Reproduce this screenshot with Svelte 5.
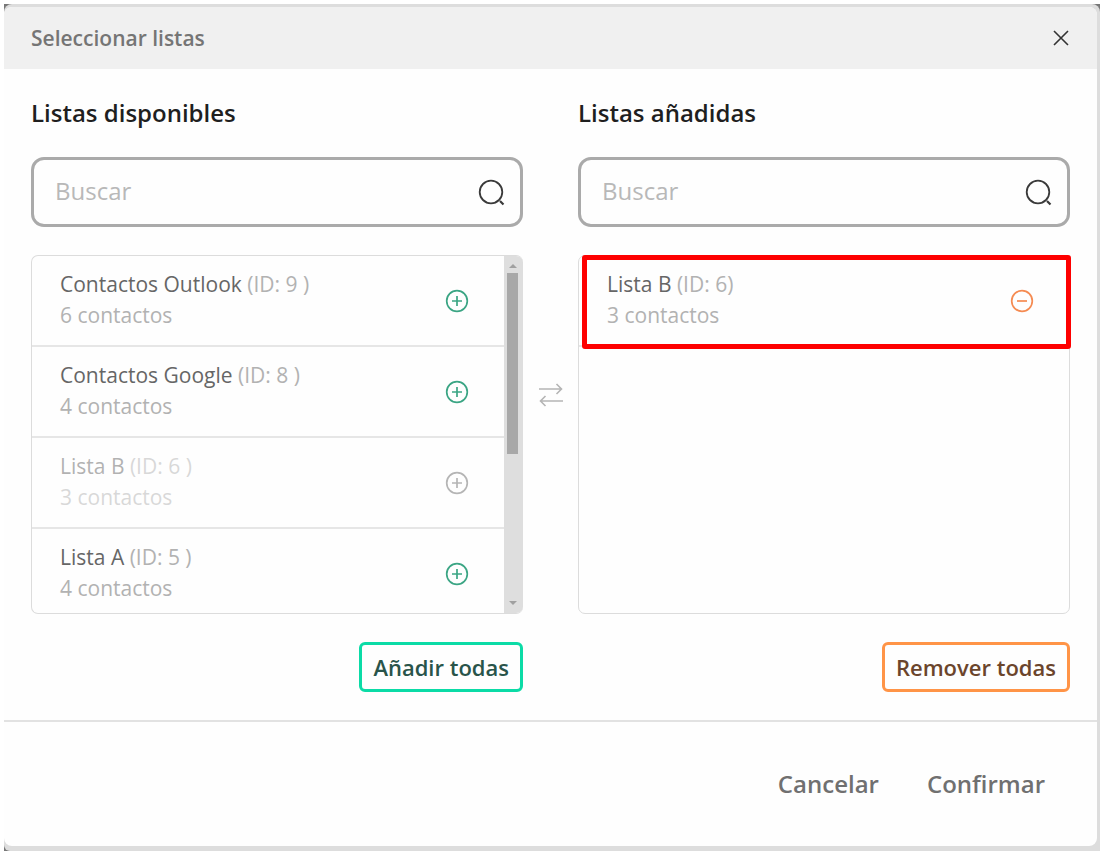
<script lang="ts">
  type List = { id: number; name: string; contacts: number };

  const available: List[] = [
    { id: 9, name: "Contactos Outlook", contacts: 6 },
    { id: 8, name: "Contactos Google", contacts: 4 },
    { id: 6, name: "Lista B", contacts: 3 },
    { id: 5, name: "Lista A", contacts: 4 },
  ];

  let added: List[] = $state([{ id: 6, name: "Lista B", contacts: 3 }]);
  let searchAvailable = $state("");
  let searchAdded = $state("");

  function matches(list: List, query: string) {
    return list.name.toLowerCase().includes(query.toLowerCase());
  }

  function isAdded(list: List) {
    return added.some((item) => item.id === list.id);
  }

  function remove(list: List) {
    added = added.filter((item) => item.id !== list.id);
  }
</script>

{#snippet searchIcon()}
  <svg class="search-icon" viewBox="0 0 28 28" aria-hidden="true">
    <circle cx="14" cy="14" r="11.3" />
    <path d="M23 23l3.500 3.500" stroke-width="2.2" />
  </svg>
{/snippet}

<div class="page">
  <div class="backdrop">
    <div class="modal" role="dialog" aria-labelledby="modal-title">
      <header>
        <h2 id="modal-title">Seleccionar listas</h2>
        <button class="close" aria-label="Cerrar">
          <svg viewBox="0 0 16 16" aria-hidden="true">
            <path d="M1 1l14 14M15 1L1 15" />
          </svg>
        </button>
      </header>

      <div class="columns">
        <section>
          <h3>Listas disponibles</h3>
          <label class="search">
            <input type="text" placeholder="Buscar" aria-label="Buscar listas disponibles" bind:value={searchAvailable} />
            {@render searchIcon()}
          </label>
          <div class="box scrollable">
            <ul>
              {#each available.filter((l) => matches(l, searchAvailable)) as list (list.id)}
                <li class:disabled={isAdded(list)}>
                  <div class="info">
                    <p><span class="name">{list.name}</span> (ID: {list.id} )</p>
                    <p>{list.contacts} contactos</p>
                  </div>
                  <button
                    class="action add"
                    aria-label="Añadir {list.name}"
                    disabled={isAdded(list)}
                    onclick={() => added.push(list)}
                  >
                    <svg viewBox="0 0 24 24" aria-hidden="true">
                      <circle cx="12" cy="12" r="10.3" />
                      <path d="M12 7v10M7 12h10" />
                    </svg>
                  </button>
                </li>
              {/each}
            </ul>
            <div class="scrollbar" aria-hidden="true">
              <span class="arrow up"></span>
              <span class="thumb"></span>
              <span class="arrow down"></span>
            </div>
          </div>
          <button class="bulk green" onclick={() => (added = [...available])}>Añadir todas</button>
        </section>

        <svg class="swap" viewBox="0 0 24 24" aria-hidden="true">
          <path d="M0 6h23M17.500 1l5 5l-5 5M24 18H1M6.500 13l-5 5l5 5" />
        </svg>

        <section>
          <h3>Listas añadidas</h3>
          <label class="search">
            <input type="text" placeholder="Buscar" aria-label="Buscar listas añadidas" bind:value={searchAdded} />
            {@render searchIcon()}
          </label>
          <div class="box">
            <ul>
              {#each added.filter((l) => matches(l, searchAdded)) as list (list.id)}
                <li class="highlighted">
                  <div class="info">
                    <p><span class="name">{list.name}</span> (ID: {list.id})</p>
                    <p>{list.contacts} contactos</p>
                  </div>
                  <button
                    class="action remove"
                    aria-label="Remover {list.name}"
                    onclick={() => remove(list)}
                  >
                    <svg viewBox="0 0 24 24" aria-hidden="true">
                      <circle cx="12" cy="12" r="10.3" />
                      <path d="M7 12h10" />
                    </svg>
                  </button>
                </li>
              {/each}
            </ul>
          </div>
          <button class="bulk orange" onclick={() => (added = [])}>Remover todas</button>
        </section>
      </div>

      <footer>
        <button>Cancelar</button>
        <button>Confirmar</button>
      </footer>
    </div>
  </div>
</div>

<style>
  :global(body) {
    background: #fff;
    font-family: "Open Sans", "Noto Sans", sans-serif;
  }

  h2,
  h3,
  p,
  ul {
    margin: 0;
    padding: 0;
  }

  button {
    padding: 0;
    border: none;
    background: none;
    font-family: inherit;
    cursor: pointer;
  }

  svg {
    display: block;
    fill: none;
    stroke: currentColor;
  }

  .page {
    margin: 4px 7px 0 4px;
    background: #777;
  }

  .backdrop {
    padding: 3px 3px 5px 0;
    border-radius: 8px 8px 0 6px;
    background: #ddd;
  }

  .modal {
    overflow: hidden;
    border-radius: 8px;
    background: #fefefe;
  }

  header {
    display: flex;
    align-items: center;
    justify-content: space-between;
    height: 62px;
    box-sizing: border-box;
    padding: 0 28px 0 27px;
    background: #f0f0f0;
  }

  h2 {
    color: #757575;
    font-size: 21px;
    font-weight: 600;
    line-height: 31px;
  }

  .close svg {
    width: 16px;
    height: 16px;
    color: #333;
    stroke-width: 1.6;
  }

  .columns {
    display: grid;
    grid-template-columns: 1fr 55px 1fr;
    align-items: center;
    padding: 28px 27px;
    border-bottom: 2px solid #e2e2e2;
  }

  section {
    display: flex;
    flex-direction: column;
    min-width: 0;
  }

  h3 {
    margin-bottom: 28px;
    color: #1f1f1f;
    font-size: 24px;
    font-weight: 600;
    line-height: 32px;
  }

  .search {
    display: flex;
    align-items: center;
    height: 70px;
    box-sizing: border-box;
    margin-bottom: 28px;
    padding: 0 15px 0 21px;
    border: 3px solid #aaa;
    border-radius: 13px;
  }

  .search input {
    flex: 1;
    min-width: 0;
    padding: 0 0 3px;
    border: none;
    outline: none;
    background: none;
    color: #555;
    font-family: inherit;
    font-size: 24px;
    line-height: 32px;
  }

  .search input::placeholder {
    color: #b8b8b8;
    opacity: 1;
  }

  .search-icon {
    width: 28px;
    height: 28px;
    color: #3a3a3a;
    stroke-width: 1.8;
  }

  .box {
    display: flex;
    height: 359px;
    box-sizing: border-box;
    margin-bottom: 28px;
    border: 1px solid #dcdcdc;
    border-radius: 7px;
  }

  .scrollable {
    overflow: hidden;
    border-right: none;
  }

  ul {
    flex: 1;
    min-width: 0;
    list-style: none;
  }

  li {
    display: flex;
    align-items: center;
    justify-content: space-between;
    height: 91px;
    box-sizing: border-box;
    padding: 0 35px 0 28px;
    border-bottom: 2px solid #e6e6e6;
  }

  .info {
    padding-bottom: 1px;
    color: #b2b2b2;
    font-size: 21px;
    line-height: 31px;
  }

  .name {
    color: #666;
  }

  .disabled .info {
    opacity: 0.5;
  }

  .action svg {
    width: 24px;
    height: 24px;
    stroke-width: 1.7;
  }

  .add {
    color: #3ba584;
  }

  .add:disabled {
    color: #b5b5b5;
    cursor: default;
  }

  .remove {
    color: #f58b52;
  }

  /* red frame drawn over the row and the edge of the box */
  .highlighted {
    position: relative;
  }

  .highlighted::after {
    content: "";
    position: absolute;
    inset: -1px -2px -4px 3px;
    border: 5px solid #fe0000;
    border-radius: 3px;
    pointer-events: none;
  }

  .scrollbar {
    display: flex;
    flex-direction: column;
    align-items: center;
    width: 19px;
    padding: 8px 2px 8px 0;
    box-sizing: border-box;
    background: #dedede;
  }

  .thumb {
    width: 11px;
    height: 181px;
    margin-top: 5px;
    background: #a8a8a8;
  }

  .arrow {
    border: 4px solid transparent;
  }

  .up {
    height: 0;
    border-top: none;
    border-bottom-color: #a0a0a0;
  }

  .down {
    height: 0;
    margin-top: auto;
    border-top-color: #a0a0a0;
    border-bottom: none;
  }

  .swap {
    justify-self: center;
    width: 24px;
    height: 24px;
    color: #b5b5b5;
    stroke-width: 1.6;
  }

  .bulk {
    align-self: flex-end;
    padding: 6px 11px;
    border: 3px solid;
    border-radius: 6px;
    font-size: 22px;
    font-weight: 600;
    line-height: 32px;
  }

  .green {
    border-color: #0bdba6;
    color: #29544a;
  }

  .orange {
    border-color: #ff9447;
    color: #6b452c;
  }

  footer {
    display: flex;
    justify-content: flex-end;
    gap: 48px;
    padding: 46px 52px;
  }

  footer button {
    color: #707070;
    font-size: 24px;
    font-weight: 600;
    line-height: 32px;
  }
</style>
